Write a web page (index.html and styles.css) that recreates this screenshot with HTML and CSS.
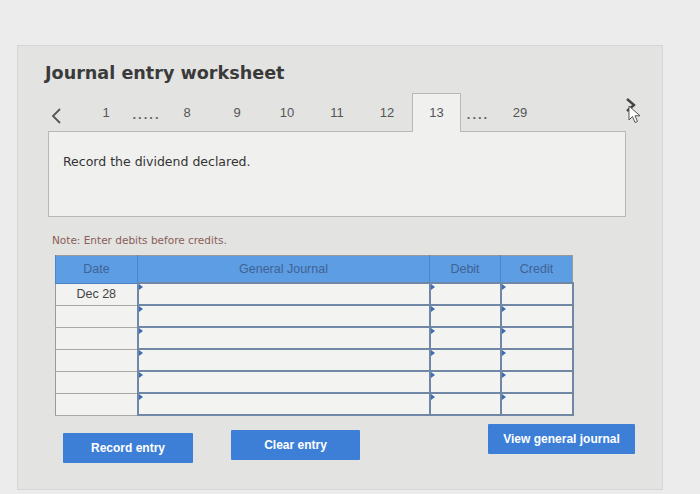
FILE: index.html
```html
<!DOCTYPE html>
<html>
<head>
<meta charset="utf-8">
<link rel="stylesheet" href="styles.css">
</head>
<body>
<div class="panel">
  <h1 class="title">Journal entry worksheet</h1>
  <div class="tabs">
    <div class="tab arrow prev"><svg width="12" height="16" viewBox="0 0 12 16"><path d="M10 1 L3 8 L10 15" fill="none" stroke="#555" stroke-width="1.8"/></svg></div>
    <div class="tab first">1</div>
    <div class="tab dots">.....</div>
    <div class="tab">8</div>
    <div class="tab">9</div>
    <div class="tab">10</div>
    <div class="tab">11</div>
    <div class="tab">12</div>
    <div class="tab active">13</div>
    <div class="tab dots dots2">....</div>
    <div class="tab">29</div>
    <div class="tab arrow next"><svg width="12" height="14" viewBox="0 0 12 14"><path d="M2 1 L9 7 L2 13" fill="none" stroke="#444" stroke-width="2.4"/></svg></div>
  </div>
  <div class="box">
    <p class="prompt">Record the dividend declared.</p>
  </div>
  <p class="note">Note: Enter debits before credits.</p>
  <table class="journal">
    <thead>
      <tr><th class="c-date">Date</th><th class="c-gj">General Journal</th><th class="c-dr">Debit</th><th class="c-cr">Credit</th></tr>
    </thead>
    <tbody>
      <tr><td class="date">Dec 28</td><td class="inp"><span class="flag"></span></td><td class="inp"><span class="flag"></span></td><td class="inp"><span class="flag"></span></td></tr>
      <tr><td class="date"></td><td class="inp"><span class="flag"></span></td><td class="inp"><span class="flag"></span></td><td class="inp"><span class="flag"></span></td></tr>
      <tr><td class="date"></td><td class="inp"><span class="flag"></span></td><td class="inp"><span class="flag"></span></td><td class="inp"><span class="flag"></span></td></tr>
      <tr><td class="date"></td><td class="inp"><span class="flag"></span></td><td class="inp"><span class="flag"></span></td><td class="inp"><span class="flag"></span></td></tr>
      <tr><td class="date"></td><td class="inp"><span class="flag"></span></td><td class="inp"><span class="flag"></span></td><td class="inp"><span class="flag"></span></td></tr>
      <tr><td class="date"></td><td class="inp"><span class="flag"></span></td><td class="inp"><span class="flag"></span></td><td class="inp"><span class="flag"></span></td></tr>
    </tbody>
  </table>
  <div class="buttons">
    <button class="btn record">Record entry</button>
    <button class="btn clear">Clear entry</button>
    <button class="btn view">View general journal</button>
  </div>
  <svg class="cursor" width="14" height="20" viewBox="0 0 14 20"><path d="M1 1 L1 15 L4.5 11.5 L7 17.5 L9.5 16.5 L7 10.8 L12 10.8 Z" fill="#fff" stroke="#555" stroke-width="1"/></svg>
</div>
</body>
</html>
```
FILE: styles.css
```css
html, body {
  margin: 0;
  padding: 0;
}
body {
  background: #ececec;
  width: 700px;
  height: 494px;
  overflow: hidden;
  font-family: "DejaVu Sans", Verdana, sans-serif;
}
.panel {
  position: relative;
  margin: 45px 0 0 17px;
  width: 646px;
  height: 445px;
  box-sizing: border-box;
  padding-top: 15px;
  background: #e3e3e2;
  border: 1px solid #d6d6d6;
}
.title {
  margin: 0 0 0 27px;
  height: 24px;
  line-height: 24px;
  font-size: 17.6px;
  font-weight: bold;
  color: #3a3a3a;
}
.tabs {
  display: flex;
  align-items: stretch;
  margin: 8px 0 0 30px;
  height: 38px;
  width: 590px;
  font-family: "Liberation Sans", Arial, sans-serif;
  font-size: 13px;
  color: #555;
}
.tab {
  width: 50px;
  display: flex;
  align-items: center;
  justify-content: center;
  padding-top: 1px;
  box-sizing: border-box;
}
.tab.prev {
  width: 15px;
  justify-content: flex-start;
  padding-left: 2px;
  padding-top: 8px;
}
.tab.first {
  width: 50px;
  margin-left: 18px;
}
.tab.dots {
  width: 31px;
  letter-spacing: 2px;
  font-weight: bold;
  padding-top: 4px;
  color: #666;
}
.tab.dots2 {
  width: 34px;
}
.tab.active {
  width: 49px;
  background: #f0f0ef;
  border: 1px solid #b8b8b8;
  border-bottom: none;
  margin-bottom: -1px;
  position: relative;
  z-index: 1;
  padding-top: 0;
  padding-bottom: 2px;
}
.tab.next {
  width: 14px;
  margin-left: auto;
  padding-top: 0;
  padding-bottom: 14px;
}
.box {
  margin-left: 30px;
  width: 578px;
  height: 86px;
  box-sizing: border-box;
  background: #f0f0ef;
  border: 1px solid #b8b8b8;
  padding: 22px 0 0 14px;
}
.prompt {
  margin: 0;
  font-size: 12.5px;
  color: #333;
}
.note {
  margin: 16px 0 0 34px;
  height: 14px;
  line-height: 14px;
  font-size: 10.5px;
  color: #8a5e56;
}
.journal {
  margin: 8px 0 0 37px;
  width: 513px;
  border-collapse: collapse;
  table-layout: fixed;
  font-family: "Liberation Sans", Arial, sans-serif;
  border: 1px solid #9a9a9a;
}
.journal th {
  height: 26px;
  padding: 0;
  background: #5d9de4;
  color: #3f6393;
  font-size: 12.5px;
  font-weight: normal;
  border-left: 1px solid #4a86cc;
  border-bottom: 1px solid #4a7fc0;
}
.c-date { width: 81px; }
.c-gj { width: 291px; }
.c-dr { width: 70px; }
.c-cr { width: 71px; }
.journal td {
  height: 22px;
  padding: 0;
  box-sizing: border-box;
}
.journal td.date {
  background: #f2f2f1;
  border-bottom: 1px solid #a8a8a8;
  text-align: center;
  font-size: 12.5px;
  color: #444;
}
.journal td.inp {
  position: relative;
  background: #f3f3f2;
  border: 2px solid #7088a6;
}
.flag {
  position: absolute;
  left: 0;
  top: 0;
  width: 0;
  height: 0;
  border-top: 3px solid transparent;
  border-bottom: 3px solid transparent;
  border-left: 4px solid #3c6db0;
}
.buttons {
  display: flex;
  margin: 17px 0 0 45px;
}
.btn {
  height: 30px;
  border: none;
  border-radius: 1px;
  background: #3d7fd7;
  color: #fff;
  font-family: "Liberation Sans", Arial, sans-serif;
  font-weight: bold;
  font-size: 12px;
  padding: 0;
}
.btn.record { width: 130px; }
.btn.clear { width: 129px; margin-left: 38px; margin-top: -3px; }
.btn.view { width: 147px; margin-left: 128px; margin-top: -9px; }
.cursor {
  position: absolute;
  left: 610px;
  top: 59px;
}
```
